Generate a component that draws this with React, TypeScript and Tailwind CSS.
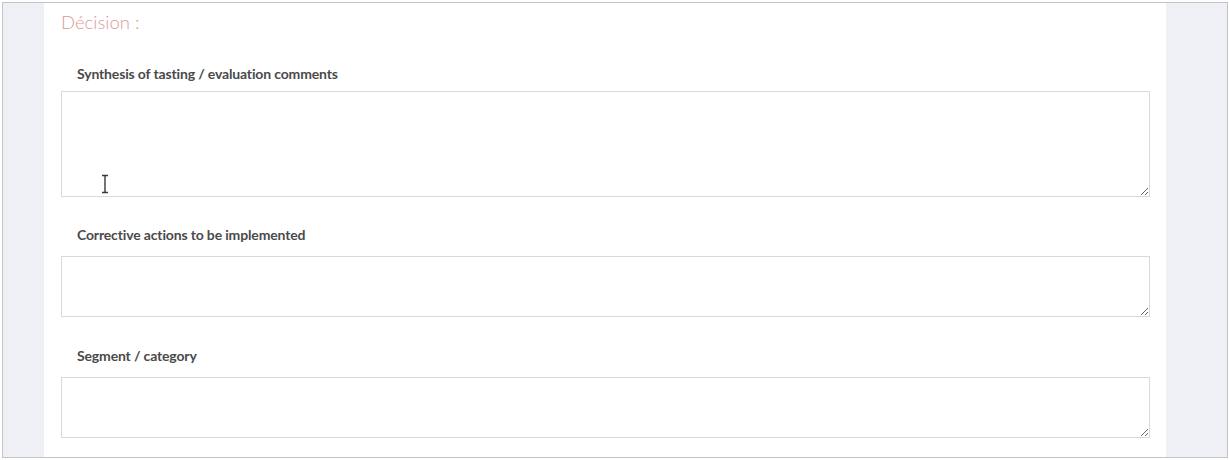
import React from "react";

// Types
interface FieldProps {
  label: string;
  height: string;
  labelTop: string;
  gap: string;
}

// Atomic Components
const Field = ({ label, height, labelTop, gap }: FieldProps) => (
  <div className={`flex flex-col ${labelTop}`}>
    <label className="pl-[16px] text-[14px] leading-[16px] font-bold tracking-[-0.15px] text-[#4a4a4a]">
      {label}
    </label>
    <textarea
      className={`${gap} w-[1089px] ${height} border border-[#d9d9d9] bg-white outline-none`}
    />
  </div>
);

const TextCursor = () => (
  <svg
    className="absolute left-[97px] top-[171px]"
    width="10"
    height="20"
    viewBox="0 0 10 20"
  >
    <path
      d="M2 1.5h6M5 1.5v17M2 18.5h6"
      stroke="#3a3a3a"
      strokeWidth="1.4"
      fill="none"
    />
  </svg>
);

// Main Component
export default function App() {
  return (
    <div
      className="w-[1229px] h-[460px] bg-white pt-[2px] pl-[2px]"
      style={{ fontFamily: "Lato, 'Open Sans', sans-serif" }}
    >
      <div className="relative flex w-[1226px] h-[456px] border border-[#c4c4c4] bg-[#eef0f5]">
        <div className="ml-[41px] w-[1122px] h-full bg-white pl-[17px]">
          <h2 className="pt-[7px] text-[18.5px] leading-[24px] font-light text-[#d99c96]">
            Décision :
          </h2>
          <Field
            label="Synthesis of tasting / evaluation comments"
            height="h-[106px]"
            labelTop="mt-[32px]"
            gap="mt-[9px]"
          />
          <Field
            label="Corrective actions to be implemented"
            height="h-[61px]"
            labelTop="mt-[30px]"
            gap="mt-[13px]"
          />
          <Field
            label="Segment / category"
            height="h-[61px]"
            labelTop="mt-[31px]"
            gap="mt-[13px]"
          />
        </div>
        <TextCursor />
      </div>
    </div>
  );
}
